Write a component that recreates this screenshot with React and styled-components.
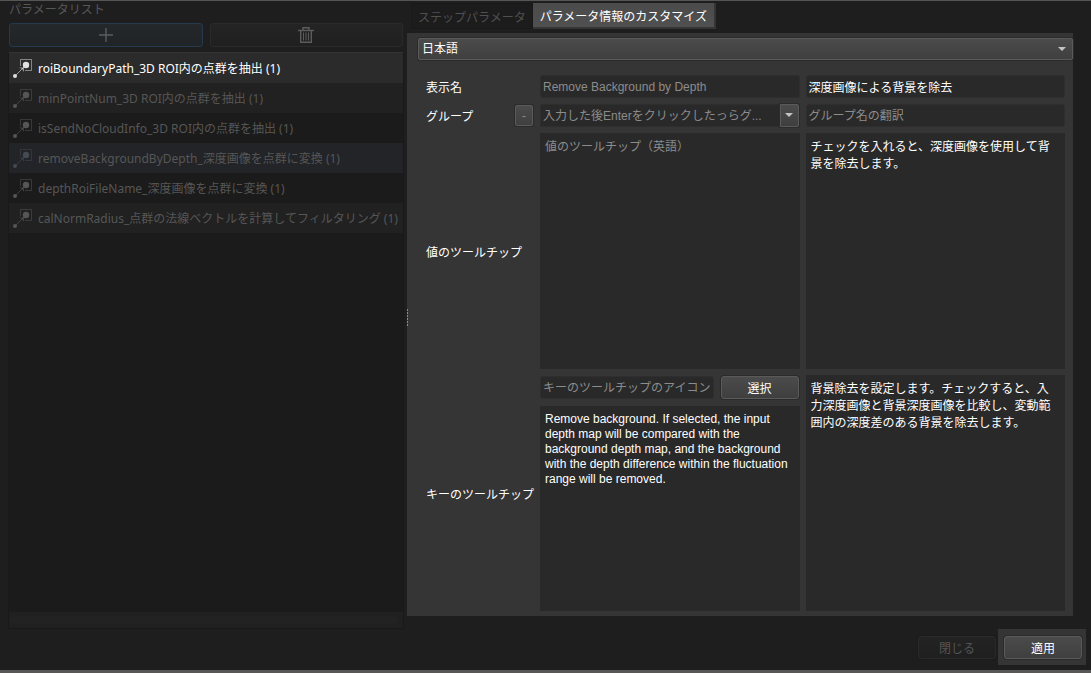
import React from 'react';
import styled, { createGlobalStyle } from 'styled-components';

const parameters = [
  { name: 'roiBoundaryPath_3D ROI内の点群を抽出 (1)', state: 'current' },
  { name: 'minPointNum_3D ROI内の点群を抽出 (1)' },
  { name: 'isSendNoCloudInfo_3D ROI内の点群を抽出 (1)' },
  { name: 'removeBackgroundByDepth_深度画像を点群に変換 (1)', state: 'selected' },
  { name: 'depthRoiFileName_深度画像を点群に変換 (1)' },
  { name: 'calNormRadius_点群の法線ベクトルを計算してフィルタリング (1)' },
];

const RoiIcon = () => (
  <svg width="20" height="20" viewBox="0 0 20 20" fill="none" aria-hidden="true">
    <path d="M7.5 8V1.5h11v11H12" stroke="currentColor" opacity="0.5" />
    <circle cx="13" cy="7" r="3.2" fill="currentColor" />
    <path d="M2 18L11 9" stroke="currentColor" opacity="0.6" />
    <path d="M6 9.5H11V14L9 11z" fill="currentColor" opacity="0.6" />
    <circle cx="2" cy="18" r="2" fill="currentColor" />
  </svg>
);

const PlusIcon = () => (
  <svg width="14" height="14" viewBox="0 0 14 14" aria-hidden="true">
    <path d="M7 0v14M0 7h14" stroke="#5c5c5c" strokeWidth="1.4" />
  </svg>
);

const TrashIcon = () => (
  <svg width="16" height="16" viewBox="0 0 16 16" fill="none" stroke="#5c5c5c" aria-hidden="true">
    <path d="M0 3.5h16" strokeWidth="1.4" />
    <path d="M5 3V.7h6V3" strokeWidth="1.4" />
    <path d="M2.7 4v11.3h10.6V4" strokeWidth="1.4" />
    <path d="M5.5 5.5v8M8 5.5v8M10.5 5.5v8" />
  </svg>
);

const ArrowIcon = () => (
  <svg width="8" height="5" viewBox="0 0 8 5" aria-hidden="true">
    <path d="M0 0h8L4 4z" fill="#c4c4c4" />
  </svg>
);

const App = () => {
  return (
    <>
      <GlobalStyle />
      <Window>
        <Sidebar>
          <SidebarTitle>パラメータリスト</SidebarTitle>
          <Tools>
            <ToolButton $focused aria-label="追加"><PlusIcon /></ToolButton>
            <ToolButton aria-label="削除"><TrashIcon /></ToolButton>
          </Tools>
          <ListBox>
            <List>
              {parameters.map((item) => (
                <Row key={item.name} $state={item.state}>
                  <RoiIcon />
                  <span>{item.name}</span>
                </Row>
              ))}
            </List>
            <ScrollTrack><ScrollThumb /></ScrollTrack>
          </ListBox>
        </Sidebar>
        <Content>
          <Tabs role="tablist">
            <Tab role="tab" aria-selected="false">ステップパラメータ</Tab>
            <Tab role="tab" aria-selected="true" $active>パラメータ情報のカスタマイズ</Tab>
          </Tabs>
          <Panel>
            <SplitHandle />
            <SelectWrap>
              <Select aria-label="言語" defaultValue="ja">
                <option value="ja">日本語</option>
              </Select>
              <ArrowIcon />
            </SelectWrap>
            <Form>
              <Label htmlFor="display-name">表示名</Label>
              <Input id="display-name" placeholder="Remove Background by Depth" />
              <Input aria-label="表示名の翻訳" defaultValue="深度画像による背景を除去" />

              <LabelCell>
                <Label htmlFor="group">グループ</Label>
                <MinusButton>-</MinusButton>
              </LabelCell>
              <Combo>
                <Input id="group" placeholder="入力した後Enterをクリックしたっらグ..." />
                <ComboButton aria-label="グループを開く"><ArrowIcon /></ComboButton>
              </Combo>
              <Input aria-label="グループ名" placeholder="グループ名の翻訳" />

              <Label htmlFor="value-tip">値のツールチップ</Label>
              <TextArea id="value-tip" placeholder="値のツールチップ（英語）" />
              <TextArea
                aria-label="値のツールチップの翻訳"
                defaultValue="チェックを入れると、深度画像を使用して背景を除去します。"
              />

              <Label htmlFor="key-tip">キーのツールチップ</Label>
              <KeyTip>
                <IconRow>
                  <Input aria-label="アイコン" placeholder="キーのツールチップのアイコン" />
                  <Button>選択</Button>
                </IconRow>
                <TextArea
                  id="key-tip"
                  $latin
                  defaultValue="Remove background. If selected, the input depth map will be compared with the background depth map, and the background with the depth difference within the fluctuation range will be removed."
                />
              </KeyTip>
              <TextArea
                aria-label="キーのツールチップの翻訳"
                defaultValue="背景除去を設定します。チェックすると、入力深度画像と背景深度画像を比較し、変動範囲内の深度差のある背景を除去します。"
              />
            </Form>
          </Panel>
          <Footer>
            <Button $dim>閉じる</Button>
            <ApplyFrame>
              <Button>適用</Button>
            </ApplyFrame>
          </Footer>
        </Content>
      </Window>
    </>
  );
};

const GlobalStyle = createGlobalStyle`
    *{
        box-sizing: border-box;
    }
    body{
        margin: 0;
        background-color: #1e1e1e;
    }
    body, button, input, select, textarea{
        font-family: "Liberation Sans", "Noto Sans CJK JP", sans-serif;
        font-size: 12px;
    }
    button, input, select, textarea{
        margin: 0;
        outline: none;
    }
    svg{
        flex: none;
        display: block;
    }
`

const Window = styled.div`
    display: flex;
    min-height: 100vh;
    border-top: 1px solid #555555;
    border-bottom: 3px solid #595656;
    background-color: #1e1e1e;
    color: white;
`

const Sidebar = styled.aside`
    flex: 0 0 407px;
    display: flex;
    flex-direction: column;
    padding: 0 3px 41px 8px;
`

const SidebarTitle = styled.div`
    height: 18px;
    margin-bottom: 4px;
    padding-left: 1px;
    line-height: 18px;
    color: #575757;
`

const Tools = styled.div`
    display: flex;
    gap: 7px;
    padding: 0 1px;
    margin-bottom: 5px;
`

const ToolButton = styled.button`
    flex: 1;
    height: 24px;
    display: flex;
    align-items: center;
    justify-content: center;
    padding: 0;
    border: 1px solid ${(props) => (props.$focused ? '#24384e' : '#2a2a2a')};
    border-radius: 3px;
    background: ${(props) => (props.$focused
    ? 'linear-gradient(#25282b, #212426)'
    : 'linear-gradient(#242424, #202020)')};
`

const ListBox = styled.div`
    flex: 1;
    display: flex;
    flex-direction: column;
    border: 1px solid #191919;
    border-top-color: #333333;
    background-color: #1b1b1b;
`

const List = styled.ul`
    flex: 1;
    margin: 0;
    padding: 0;
    list-style: none;
`

const rowColors = {
  current: ['#2b2b2b', '#ffffff', '#e0e0e0'],
  selected: ['#222427', '#565656', '#434a51'],
};

const Row = styled.li`
    height: 30px;
    display: flex;
    align-items: center;
    gap: 5px;
    padding-left: 4px;
    font-family: "Noto Sans", "Noto Sans CJK JP", sans-serif;
    white-space: nowrap;
    background-color: ${(props) => (rowColors[props.$state] || ['#1b1b1b'])[0]};
    color: ${(props) => (rowColors[props.$state] || ['', '#565656'])[1]};
    &:nth-child(2), &:last-child{
        background-color: #212121;
    }
    svg{
        color: ${(props) => (rowColors[props.$state] || ['', '', '#565656'])[2]};
    }
`

const ScrollTrack = styled.div`
    padding: 4px 5px 4px 1px;
    background-color: #202020;
`

const ScrollThumb = styled.div`
    height: 8px;
    border-radius: 4px;
    background-color: #222222;
`

const Content = styled.main`
    flex: 1;
    min-width: 0;
    display: flex;
    flex-direction: column;
`

const Tabs = styled.div`
    display: flex;
    height: 32px;
    padding: 2px 0 4px 4px;
`

const Tab = styled.button`
    height: 26px;
    padding: ${(props) => (props.$active ? '0 7px' : '0 6px')};
    border: 1px solid ${(props) => (props.$active ? '#353535' : '#191919')};
    border-width: ${(props) => (props.$active ? '0 2px 2px 0' : '1px')};
    background: ${(props) => (props.$active ? 'linear-gradient(#4b4b4b, #505050)' : '#1c1c1c')};
    color: ${(props) => (props.$active ? 'white' : '#505050')};
`

const Panel = styled.section`
    position: relative;
    flex: 1;
    display: flex;
    flex-direction: column;
    gap: 15px;
    margin-right: 18px;
    padding: 5px 0 5px 11px;
    background-color: #353535;
`

const SplitHandle = styled.div`
    position: absolute;
    left: 0;
    top: 50%;
    width: 1px;
    height: 18px;
    margin-top: -16px;
    background: repeating-linear-gradient(#8c8c8c 0 2px, #353535 2px 3px);
`

const SelectWrap = styled.div`
    display: flex;
    align-items: center;
    svg{
        margin-left: -15px;
        margin-right: 7px;
        pointer-events: none;
    }
`

const Select = styled.select`
    flex: 1;
    appearance: none;
    height: 22px;
    padding: 0 20px 0 3px;
    border: 1px solid #5a5a5a;
    border-radius: 2px;
    background: linear-gradient(#4b4b4b, #3f3f3f);
    box-shadow: 0 0 0 1px #2b2b2b;
    color: white;
`

const Form = styled.div`
    flex: 1;
    display: grid;
    grid-template-columns: 108px minmax(0, 1fr) minmax(0, 1fr);
    grid-template-rows: 23px 23px 1fr 1fr;
    gap: 6px;
    padding: 0 8px;
`

const Label = styled.label`
    align-self: center;
    white-space: nowrap;
`

const LabelCell = styled.div`
    display: flex;
    align-items: center;
    justify-content: space-between;
    padding-right: 1px;
`

const Input = styled.input`
    flex: 1;
    width: 100%;
    min-width: 0;
    height: 23px;
    padding: 0 2px;
    border: 1px solid #2e2e2e;
    border-radius: 3px;
    background-color: #292929;
    color: white;
    text-overflow: ellipsis;
    &::placeholder{
        color: #8c8c8c;
    }
`

const TextArea = styled.textarea`
    flex: 1;
    display: block;
    width: 100%;
    min-height: 60px;
    padding: 6px 5px;
    border: 0;
    resize: none;
    background-color: #292929;
    color: white;
    line-height: ${(props) => (props.$latin ? '15px' : '17px')};
    &::placeholder{
        color: #8c8c8c;
    }
`

const Button = styled.button`
    width: 78px;
    height: 23px;
    padding: 0;
    border: 1px solid ${(props) => (props.$dim ? '#2a2a2a' : '#5a5a5a')};
    border-radius: 3px;
    background: ${(props) => (props.$dim
    ? 'linear-gradient(#232323, #1f1f1f)'
    : 'linear-gradient(#4b4b4b, #3f3f3f)')};
    box-shadow: 0 0 0 1px ${(props) => (props.$dim ? '#1b1b1b' : '#2b2b2b')};
    color: ${(props) => (props.$dim ? '#555555' : 'white')};
`

const MinusButton = styled(Button)`
    width: 18px;
    height: 21px;
    border-radius: 2px;
    color: #8c8c8c;
`

const Combo = styled.div`
    display: flex;
    padding-right: 1px;
    border-radius: 3px;
    background-color: #292929;
`

const ComboButton = styled(Button)`
    width: 19px;
    display: flex;
    align-items: center;
    justify-content: center;
    border-radius: 0 2px 2px 0;
`

const KeyTip = styled.div`
    display: flex;
    flex-direction: column;
    gap: 6px;
`

const IconRow = styled.div`
    display: flex;
    gap: 7px;
    padding: 1px 1px 1px 0;
`

const Footer = styled.footer`
    display: flex;
    align-items: center;
    justify-content: flex-end;
    gap: 2px;
    padding: 13px 5px 5px;
`

const ApplyFrame = styled.div`
    padding: 7px 4px 6px 6px;
    background-color: #353535;
`

export default App;
